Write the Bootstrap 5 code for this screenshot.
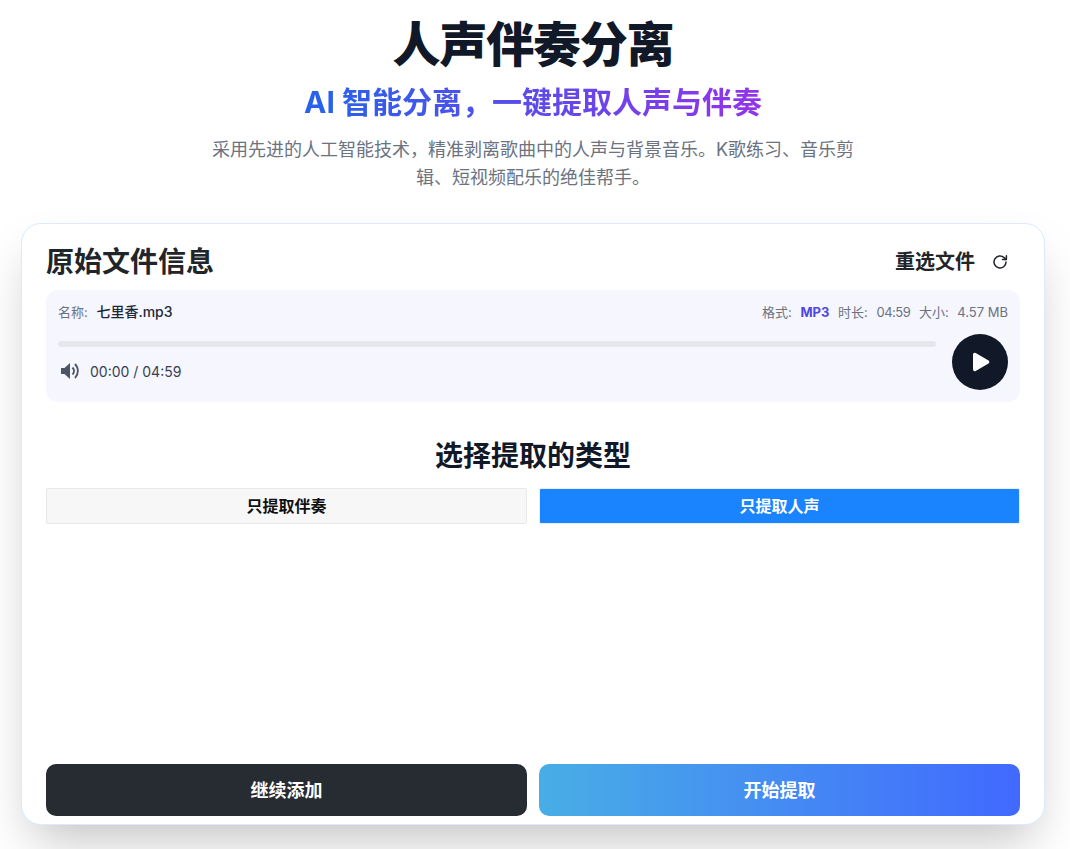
<!DOCTYPE html>
<html lang="zh-CN">
<head>
    <meta charset="UTF-8">
    <title>人声伴奏分离</title>
    <link href="https://cdn.jsdelivr.net/npm/bootstrap@5.3.0/dist/css/bootstrap.min.css" rel="stylesheet">
    <style>
        html, body { height: 849px; overflow: hidden; }
        body { font-family: Inter, "Noto Sans CJK SC", sans-serif; background: #fff; color: #212529; }
        .page-wrap { padding: 16px 25px 0 21px; height: 849px; }
        .hero-title { font-size: 48px; line-height: 58px; font-weight: 900; letter-spacing: -.025em; color: #111827; margin: 0; }
        .hero-sub { font-size: 30px; line-height: 36px; font-weight: 700; margin: 10px auto 0; background: linear-gradient(90deg, #2563eb, #9333ea); -webkit-background-clip: text; background-clip: text; color: transparent; width: fit-content; }
        .hero-desc { font-size: 18px; line-height: 28px; color: #6b7280; width: 656px; margin: 16px auto 0; }
        .work-card { height: 602px; margin-top: 31px; border: 1px solid #dbeafe; border-radius: 20px; padding: 16px 24px 8px; box-shadow: 0 25px 50px -12px rgba(0,0,0,.25); background: #fff; }
        .file-title { font-size: 28px; line-height: 44px; font-weight: 700; margin: 0; }
        .reselect { font-size: 20px; font-weight: 700; color: #212529; gap: 16px; padding-right: 11px; }
        .file-box { height: 112px; margin-top: 6px; background: #f5f6fe; border-radius: 12px; padding: 12px; }
        .meta-line { font-size: 13px; line-height: 20px; color: #6b7280; }
        .meta-line b { font-size: 14px; font-weight: 500; color: #1f2937; margin-left: 5px; }
        .meta-line .fmt { color: #4f46e5; font-weight: 700; }
        .meta-line .val { margin-left: 5px; margin-right: 5px; }
        .meta-line .val-time { letter-spacing: -.5px; }
        .play-row { gap: 16px; margin-top: 12px; }
        .track { height: 6px; background: #e5e7eb; border-radius: 3px; margin-top: 7px; }
        .time-row { margin-top: 12px; }
        .time-text { font-size: 14px; color: #374151; }
        .play-btn { width: 56px; height: 56px; border-radius: 50%; background: #111827; border: 0; flex: none; padding: 0; }
        .type-title { font-size: 28px; line-height: 36px; font-weight: 700; color: #111827; margin: 36px 0 14px; }
        .pair-row { gap: 12px; }
        .type-btn { height: 36px; font-size: 16px; font-weight: 600; border-radius: 2px; padding: 0; }
        .type-off { background: #f7f7f7; border: 1px solid #e8e8e8; color: #111; }
        .type-on { background: #1a84ff; border: 1px solid #e8eef6; color: #fff; }
        .action-btn { height: 52px; border: 0; border-radius: 10px; color: #fff; font-size: 18px; font-weight: 700; padding: 0; }
        .act-dark { background: #272b32; }
        .act-grad { background: linear-gradient(90deg, #48aee6, #4169ff); }
    </style>
</head>
<body>
    <div class="page-wrap">
        <!-- 标题 -->
        <div class="text-center">
            <h1 class="hero-title">人声伴奏分离</h1>
            <h2 class="hero-sub">AI 智能分离，一键提取人声与伴奏</h2>
            <p class="hero-desc">采用先进的人工智能技术，精准剥离歌曲中的人声与背景音乐。K歌练习、音乐剪辑、短视频配乐的绝佳帮手。</p>
        </div>

        <div class="work-card d-flex flex-column">
            <div class="d-flex justify-content-between align-items-center">
                <h3 class="file-title">原始文件信息</h3>
                <div class="reselect d-flex align-items-center">
                    <span>重选文件</span>
                    <svg width="18" height="18" viewBox="0 0 24 24" fill="none" stroke="#212529" stroke-width="2" stroke-linecap="round" stroke-linejoin="round"><path d="M20 12a8 8 0 1 1-2.6-5.9L20 8.5"/><path d="M20.5 3.5v5.2h-5.2"/></svg>
                </div>
            </div>

            <div class="file-box">
                <div class="meta-line d-flex justify-content-between align-items-center">
                    <div>名称: <b>七里香.mp3</b></div>
                    <div>格式: <span class="fmt val">MP3</span> 时长: <span class="val val-time">04:59</span> 大小: <span class="val me-0">4.57 MB</span></div>
                </div>
                <div class="play-row d-flex">
                    <div class="flex-grow-1">
                        <div class="track"></div>
                        <div class="time-row d-flex align-items-center gap-2">
                            <svg width="24" height="24" viewBox="-2 -2 24 24" fill="#4b5563"><path d="M1 7v6h3.5L10 18V2L4.5 7z"/><path d="M12.5 6.5a5 5 0 0 1 0 7" fill="none" stroke="#4b5563" stroke-width="2"/><path d="M15 3a10 10 0 0 1 0 14" fill="none" stroke="#4b5563" stroke-width="1.8"/></svg>
                            <span class="time-text">00:00 / 04:59</span>
                        </div>
                    </div>
                    <button class="play-btn d-flex align-items-center justify-content-center" type="button" aria-label="播放">
                        <svg width="28" height="28" viewBox="0 0 24 24"><path d="M6 5.5v13a1.5 1.5 0 0 0 2.3 1.2l11-6.5a1.4 1.4 0 0 0 0-2.4l-11-6.5A1.5 1.5 0 0 0 6 5.5z" fill="#fff"/></svg>
                    </button>
                </div>
            </div>

            <h3 class="type-title text-center">选择提取的类型</h3>
            <div class="d-flex pair-row">
                <button class="btn type-btn type-off w-50" type="button">只提取伴奏</button>
                <button class="btn type-btn type-on w-50" type="button">只提取人声</button>
            </div>

            <div class="d-flex pair-row mt-auto">
                <button class="btn action-btn act-dark w-50" type="button">继续添加</button>
                <button class="btn action-btn act-grad w-50" type="button">开始提取</button>
            </div>
        </div>
    </div>
    <script src="https://cdn.jsdelivr.net/npm/bootstrap@5.3.0/dist/js/bootstrap.bundle.min.js"></script>
</body>
</html>
